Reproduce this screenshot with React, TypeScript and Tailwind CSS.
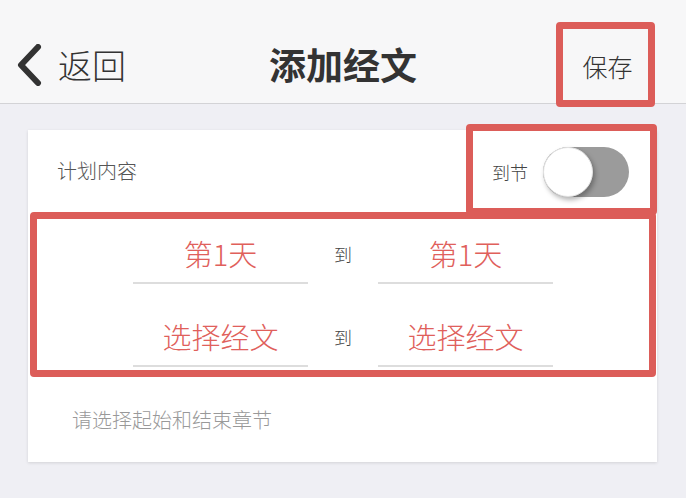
import React from "react";

const font = { fontFamily: '"Noto Sans CJK SC", "Noto Sans", sans-serif' };

function Toggle() {
  return (
    <div className="relative w-[86px] h-[50px] rounded-full bg-[#9b9b9b]">
      <div className="absolute left-0 top-0 w-[50px] h-[50px] rounded-full bg-white border border-[#e2e2e2] shadow-[2px_3px_5px_rgba(0,0,0,0.3)]" />
    </div>
  );
}

function PickRow({ left, right }: { left: string; right: string }) {
  return (
    <div className="grid grid-cols-[175px_70px_175px]">
      <div className="h-[59px] flex items-center justify-center border-b-2 border-[#dddddd] text-[29px] font-light text-[#e0605b]">
        {left}
      </div>
      <div className="h-[59px] flex items-center justify-center text-[18px] font-light text-[#444]">到</div>
      <div className="h-[59px] flex items-center justify-center border-b-2 border-[#dddddd] text-[29px] font-light text-[#e0605b]">
        {right}
      </div>
    </div>
  );
}

export default function App() {
  return (
    <div className="w-[686px] h-[498px] bg-[#efeff4] overflow-hidden" style={font}>
      {/* Header */}
      <div className="relative z-10 h-[104px] bg-[#f7f7f8] border-b border-[#d3d3d6] pt-[22px]">
        <div className="grid grid-cols-[1fr_auto_1fr] items-center h-[85px]">
          <div className="flex items-center pl-[16px] text-[#333]">
            <svg width="26" height="42" viewBox="0 0 26 42" fill="none">
              <path d="M22 3 L5 21 L22 39" stroke="#333" strokeWidth="6" strokeLinecap="round" strokeLinejoin="round" />
            </svg>
            <span className="ml-[16px] text-[34px] font-light leading-none">返回</span>
          </div>
          <div className="text-[37px] font-bold text-[#333] leading-none">添加经文</div>
          <div className="flex justify-end pr-[31px]">
            <div className="w-[99px] h-[85px] border-[7px] border-[#dc5d59] rounded-[4px] flex items-center justify-center pt-[4px] pl-[4px] text-[25px] font-light text-[#333]">
              保存
            </div>
          </div>
        </div>
      </div>

      {/* Card */}
      <div className="pt-[26px]">
        <div className="ml-[28px] w-[629px] h-[332px] bg-white shadow-[0_1px_3px_rgba(0,0,0,0.12)]">
          <div className="h-[82px] flex items-center justify-between pl-[29px]">
            <span className="text-[20px] font-light text-[#555]">计划内容</span>
            <div className="self-start -mt-[6px] w-[191px] h-[91px] border-[7px] border-[#dc5d59] rounded-[4px] flex items-center pl-[19px] pt-[5px] gap-[15px]">
              <span className="text-[18px] font-light text-[#444]">到节</span>
              <Toggle />
            </div>
          </div>

          <div className="ml-[2px] w-[626px] h-[165px] border-[7px] border-[#dc5d59] rounded-[4px] pt-[6px] flex flex-col items-center gap-[24px]">
            <PickRow left="第1天" right="第1天" />
            <PickRow left="选择经文" right="选择经文" />
          </div>

          <div className="pl-[44px] pt-[31px] text-[20px] font-light leading-[24px] text-[#999]">请选择起始和结束章节</div>
        </div>
      </div>
    </div>
  );
}
